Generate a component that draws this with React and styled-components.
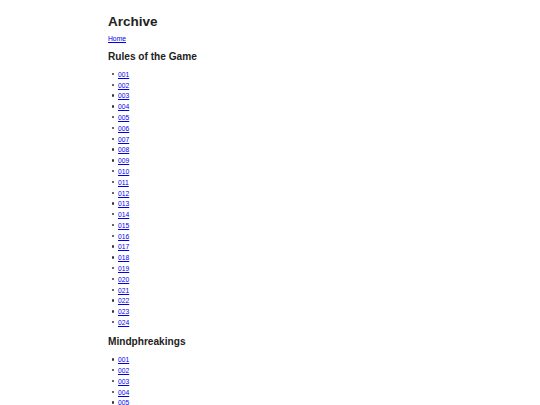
import React from "react";
import styled, { createGlobalStyle } from "styled-components";

const GlobalStyle = createGlobalStyle`
  html, body {
    margin: 0;
    padding: 0;
    background: #fff;
  }
  body {
    font-family: "Liberation Sans", Arial, sans-serif;
    font-size: 6.75px;
    line-height: 1.6;
    color: #333;
  }
`;

const Container = styled.div`
  width: 60%;
  margin: 0 auto;
  padding-top: 14px;
`;

const Title = styled.h1`
  margin: 0 0 3.6px;
  font-size: 13.5px;
  line-height: 1.2;
  font-weight: 700;
  color: #222;
`;

const Link = styled.a`
  color: #0000ee;
  text-decoration: underline;
`;

const Section = styled.h2`
  margin: ${(p) => (p.$first ? "6.6px" : "7.8px")} 0 6.6px;
  font-size: 10.125px;
  line-height: 1.2;
  font-weight: 700;
  color: #222;
`;

const List = styled.ul`
  margin: 0;
  padding-left: 4px;
  list-style: none;
`;

const Item = styled.li`
  line-height: 10.78px;

  &::before {
    content: "";
    display: inline-block;
    width: 2.4px;
    height: 2.4px;
    border-radius: 50%;
    background: #333;
    margin-right: 3.6px;
    vertical-align: 1.6px;
  }
`;

const sections = [
  { title: "Rules of the Game", count: 24 },
  { title: "Mindphreakings", count: 5 },
];

const pad = (n) => String(n).padStart(3, "0");

const App = () => {
  return (
    <>
      <GlobalStyle />
      <Container>
        <Title>Archive</Title>
        <Link href="#">Home</Link>
        {sections.map((s, idx) => (
          <div key={s.title}>
            <Section $first={idx === 0}>{s.title}</Section>
            <List>
              {Array.from({ length: s.count }, (_, i) => (
                <Item key={i}>
                  <Link href="#">{pad(i + 1)}</Link>
                </Item>
              ))}
            </List>
          </div>
        ))}
      </Container>
    </>
  );
};

export default App;
